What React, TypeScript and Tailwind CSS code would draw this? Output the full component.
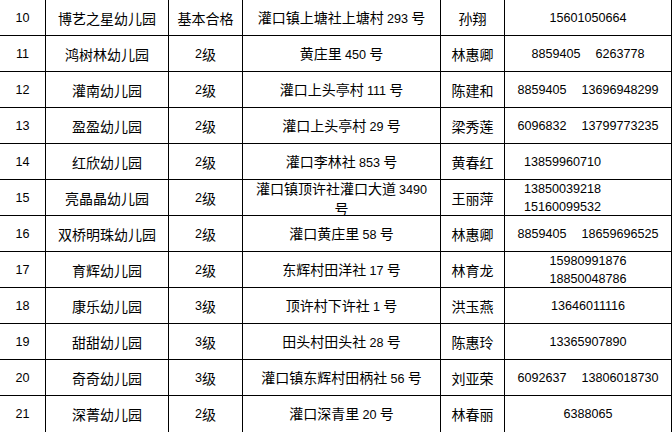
import type { ReactNode } from "react";

type Row = {
  no: string;
  name: string;
  level: string;
  addr: string;
  person: string;
  phones: string[][]; // lines, each line may hold several numbers
  phoneLeft?: boolean;
};

const rows: Row[] = [
  { no: "10", name: "博艺之星幼儿园", level: "基本合格", addr: "灌口镇上塘社上塘村 293 号", person: "孙翔", phones: [["15601050664"]] },
  { no: "11", name: "鸿树林幼儿园", level: "2级", addr: "黄庄里 450 号", person: "林惠卿", phones: [["8859405", "6263778"]] },
  { no: "12", name: "灌南幼儿园", level: "2级", addr: "灌口上头亭村 111 号", person: "陈建和", phones: [["8859405", "13696948299"]] },
  { no: "13", name: "盈盈幼儿园", level: "2级", addr: "灌口上头亭村 29 号", person: "梁秀莲", phones: [["6096832", "13799773235"]] },
  { no: "14", name: "红欣幼儿园", level: "2级", addr: "灌口李林社 853 号", person: "黄春红", phones: [["13859960710"]], phoneLeft: true },
  { no: "15", name: "亮晶晶幼儿园", level: "2级", addr: "灌口镇顶许社灌口大道 3490 号", person: "王丽萍", phones: [["13850039218"], ["15160099532"]], phoneLeft: true },
  { no: "16", name: "双桥明珠幼儿园", level: "2级", addr: "灌口黄庄里 58 号", person: "林惠卿", phones: [["8859405", "18659696525"]] },
  { no: "17", name: "育辉幼儿园", level: "2级", addr: "东辉村田洋社 17 号", person: "林育龙", phones: [["15980991876"], ["18850048786"]] },
  { no: "18", name: "康乐幼儿园", level: "3级", addr: "顶许村下许社 1 号", person: "洪玉燕", phones: [["13646011116"]] },
  { no: "19", name: "甜甜幼儿园", level: "3级", addr: "田头村田头社 28 号", person: "陈惠玲", phones: [["13365907890"]] },
  { no: "20", name: "奇奇幼儿园", level: "3级", addr: "灌口镇东辉村田柄社 56 号", person: "刘亚荣", phones: [["6092637", "13806018730"]] },
  { no: "21", name: "深菁幼儿园", level: "2级", addr: "灌口深青里 20 号", person: "林春丽", phones: [["6388065"]] },
];

// digits are drawn a bit smaller, like the half-width figures of the original font
function mix(text: string): ReactNode[] {
  return text.split(/(\d+)/).map((part, i) =>
    /^\d+$/.test(part) ? (
      <span key={i} className="font-['Liberation_Sans'] text-[12.6px]">
        {part}
      </span>
    ) : (
      <span key={i}>{part}</span>
    )
  );
}

function Cell({ children, last, left }: { children: ReactNode; last: boolean; left?: boolean }) {
  return (
    <div
      className={
        "flex h-[36px] items-center border-r border-black " +
        (last ? "" : "border-b ") +
        (left ? "justify-start pl-[19px] text-left" : "justify-center px-[8px] text-center")
      }
    >
      {children}
    </div>
  );
}

export default function App() {
  return (
    <div className="h-[432px] w-[672px] overflow-hidden bg-white text-black">
      <div className="grid grid-cols-[46px_123px_74px_198px_64px_167px] font-['Noto_Sans_CJK_SC',sans-serif] text-[14px] leading-[18px]">
        {rows.map((r, idx) => {
          const last = idx === rows.length - 1;
          return (
            <div key={r.no} className="contents">
              <Cell last={last}>{mix(r.no)}</Cell>
              <Cell last={last}>{r.name}</Cell>
              <Cell last={last}>{mix(r.level)}</Cell>
              <Cell last={last}>
                <div>{mix(r.addr)}</div>
              </Cell>
              <Cell last={last}>{r.person}</Cell>
              <Cell last={last} left={r.phoneLeft}>
                <div className="flex flex-col">
                  {r.phones.map((line, i) => (
                    <div key={i} className="flex font-['Liberation_Sans'] text-[12.6px]">
                      {line.map((p, j) => (
                        <span key={j} className={j > 0 ? "ml-[15px]" : ""}>
                          {p}
                        </span>
                      ))}
                    </div>
                  ))}
                </div>
              </Cell>
            </div>
          );
        })}
      </div>
    </div>
  );
}
